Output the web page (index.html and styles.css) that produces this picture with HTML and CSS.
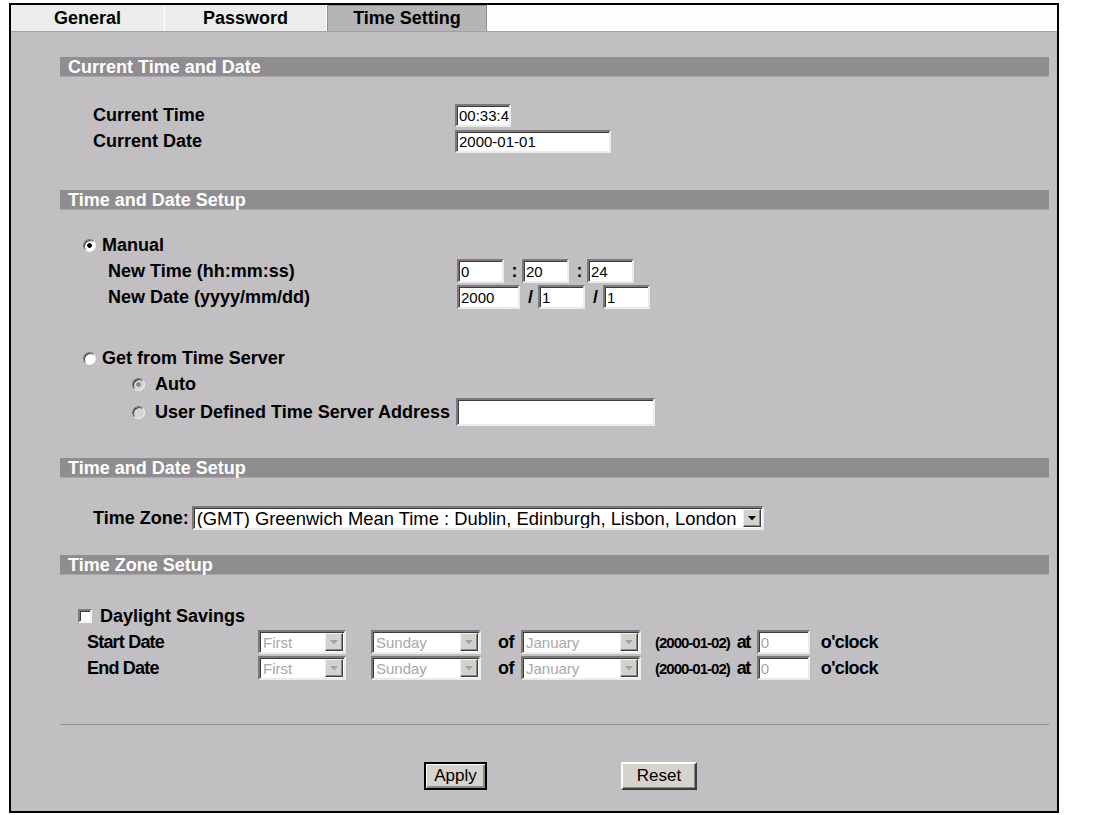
FILE: index.html
```html
<!DOCTYPE html>
<html lang="en">
<head>
<meta charset="UTF-8">
<title>Time Setting</title>
<link rel="stylesheet" href="styles.css">
</head>
<body>
<div class="frame">
  <div class="tabs">
    <div class="tab tab-general">General</div>
    <div class="tab tab-password">Password</div>
    <div class="tab tab-time active">Time Setting</div>
  </div>

  <form class="panel" onsubmit="return false;">
    <div class="bar">Current Time and Date</div>
    <div class="section now">
      <div class="row">
        <span class="lbl">Current Time</span>
        <input class="field w-now" type="text" value="00:33:4">
      </div>
      <div class="row">
        <span class="lbl">Current Date</span>
        <input class="field w-date" type="text" value="2000-01-01">
      </div>
    </div>

    <div class="bar">Time and Date Setup</div>
    <div class="section setup">
      <label class="row opt"><input class="radio" type="radio" name="mode" checked><span class="lbl">Manual</span></label>
      <div class="row sub">
        <span class="lbl">New Time (hh:mm:ss)</span>
        <input class="field w-num" type="text" value="0"><span class="sep">:</span><input class="field w-num" type="text" value="20"><span class="sep">:</span><input class="field w-num" type="text" value="24">
      </div>
      <div class="row sub">
        <span class="lbl">New Date (yyyy/mm/dd)</span>
        <input class="field w-year" type="text" value="2000"><span class="sep">/</span><input class="field w-num" type="text" value="1"><span class="sep">/</span><input class="field w-num" type="text" value="1">
      </div>
      <label class="row opt gap-top"><input class="radio" type="radio" name="mode"><span class="lbl">Get from Time Server</span></label>
      <label class="row server"><input class="radio" type="radio" name="server" checked disabled><span class="lbl">Auto</span></label>
      <div class="row server h30">
        <input class="radio" type="radio" name="server" disabled><span class="lbl">User Defined Time Server Address</span>
        <input class="field w-server" type="text" value="">
      </div>
    </div>

    <div class="bar">Time and Date Setup</div>
    <div class="section zone">
      <div class="row">
        <span class="lbl">Time Zone:</span>
        <span class="combo w-zone">
          <select><option>(GMT) Greenwich Mean Time : Dublin, Edinburgh, Lisbon, London</option></select>
          <span class="drop"><svg width="8" height="5" viewBox="0 0 8 5"><polygon points="0,0 8,0 4,4.5" fill="#000"/></svg></span>
        </span>
      </div>
    </div>

    <div class="bar">Time Zone Setup</div>
    <div class="section daylight">
      <label class="row check"><input class="box" type="checkbox"><span class="lbl">Daylight Savings</span></label>
      <div class="row dst">
        <span class="lbl">Start Date</span>
        <span class="combo w-week off"><select disabled><option>First</option></select><span class="drop"><svg width="8" height="5" viewBox="0 0 8 5"><polygon points="0,0 8,0 4,4.5" fill="#a3a3a3"/></svg></span></span>
        <span class="combo w-day off"><select disabled><option>Sunday</option></select><span class="drop"><svg width="8" height="5" viewBox="0 0 8 5"><polygon points="0,0 8,0 4,4.5" fill="#a3a3a3"/></svg></span></span>
        <span class="txt of">of</span>
        <span class="combo w-month off"><select disabled><option>January</option></select><span class="drop"><svg width="8" height="5" viewBox="0 0 8 5"><polygon points="0,0 8,0 4,4.5" fill="#a3a3a3"/></svg></span></span>
        <span class="txt when">(2000-01-02)</span>
        <span class="txt at">at</span>
        <input class="field w-hour" type="text" value="0" disabled>
        <span class="txt clock">o'clock</span>
      </div>
      <div class="row dst">
        <span class="lbl">End Date</span>
        <span class="combo w-week off"><select disabled><option>First</option></select><span class="drop"><svg width="8" height="5" viewBox="0 0 8 5"><polygon points="0,0 8,0 4,4.5" fill="#a3a3a3"/></svg></span></span>
        <span class="combo w-day off"><select disabled><option>Sunday</option></select><span class="drop"><svg width="8" height="5" viewBox="0 0 8 5"><polygon points="0,0 8,0 4,4.5" fill="#a3a3a3"/></svg></span></span>
        <span class="txt of">of</span>
        <span class="combo w-month off"><select disabled><option>January</option></select><span class="drop"><svg width="8" height="5" viewBox="0 0 8 5"><polygon points="0,0 8,0 4,4.5" fill="#a3a3a3"/></svg></span></span>
        <span class="txt when">(2000-01-02)</span>
        <span class="txt at">at</span>
        <input class="field w-hour" type="text" value="0" disabled>
        <span class="txt clock">o'clock</span>
      </div>
    </div>

    <div class="rule"></div>

    <div class="actions">
      <button type="submit" class="btn btn-default w-apply">Apply</button>
      <button type="reset" class="btn w-reset">Reset</button>
    </div>
  </form>
</div>
</body>
</html>
```

FILE: styles.css
```css
body {
  margin: 0;
  background-color: #fff;
  font-family: "Liberation Sans", Arial, sans-serif;
  color: #000;
}
.frame {
  margin: 3px 0 0 9px;
  width: 1046px;
  height: 806px;
  border: 2px solid #000;
  display: flex;
  flex-direction: column;
}
.tabs {
  display: flex;
  height: 26px;
  background-color: #fdfdfd;
}
.tab {
  display: flex;
  align-items: center;
  justify-content: center;
  box-sizing: border-box;
  font-size: 18px;
  font-weight: bold;
  background-color: #ececec;
  border-right: 1px solid #fff;
}
.tab-general { width: 154px; }
.tab-password { width: 162px; }
.tab-time { width: 160px; }
.tab.active {
  background-color: #b5b4b7;
  border: 1px solid #8d8c8f;
  border-bottom: none;
}
.panel {
  flex: 1;
  margin: 0;
  padding: 25px 8px 0 49px;
  background-color: #c1bfc2;
  border-top: 1px solid #a2a1a4;
}
.bar {
  height: 20px;
  line-height: 20px;
  padding-left: 8px;
  background-color: #8f8d90;
  border-bottom: 1px solid #a7a5a8;
  box-sizing: border-box;
  color: #fff;
  font-size: 18px;
  font-weight: bold;
}
.row {
  display: flex;
  align-items: center;
  height: 26px;
}
.row.h30 { height: 30px; }
.lbl {
  font-size: 18px;
  font-weight: bold;
  white-space: nowrap;
}

/* sections */
.now {
  margin: 25px 0 36px;
  padding-left: 33px;
}
.now .lbl { width: 362px; }
.now .field { height: 23px; }
.setup { margin: 22px 0 31px; }
.setup .opt { padding-left: 23px; }
.setup .opt .radio { margin-right: 6px; }
.setup .gap-top { margin-top: 35px; }
.setup .sub { padding-left: 48px; }
.setup .sub .lbl { width: 349px; }
.setup .server { padding-left: 72px; }
.setup .server .radio { margin-right: 10px; }
.setup .server .field {
  margin-left: 6px;
  height: 28px;
}
.zone {
  margin: 27px 0 24px;
  padding-left: 33px;
}
.zone .combo { margin-left: 3px; }
.daylight { margin-top: 28px; }
.daylight .check { padding-left: 18px; }
.daylight .box { margin-right: 8px; }
.dst { padding-left: 27px; }
.dst .lbl {
  width: 171px;
  letter-spacing: -0.8px;
}
.txt {
  font-size: 18px;
  font-weight: bold;
  white-space: nowrap;
}
.w-day { margin-left: 25px; }
.of {
  margin: 0 7px 0 17px;
  letter-spacing: -0.5px;
}
.when {
  margin-left: 14px;
  font-size: 15px;
  letter-spacing: -1px;
}
.at {
  margin: 0 7px;
  letter-spacing: -1.5px;
}
.clock {
  margin-left: 11px;
  letter-spacing: -0.6px;
}

/* form controls */
.field {
  height: 24px;
  box-sizing: border-box;
  margin: 0;
  padding: 0 0 0 2px;
  border: 2px solid;
  border-color: #7a797b #ebebeb #ebebeb #7a797b;
  box-shadow: inset 1px 1px 0 #3c3c3c;
  background-color: #fff;
  font-family: "Liberation Sans", Arial, sans-serif;
  font-size: 15px;
  color: #000;
  outline: none;
}
.field:disabled { color: #a8a8a8; }
.w-now { width: 56px; }
.w-date { width: 156px; }
.w-num { width: 47px; }
.w-year { width: 63px; }
.w-server { width: 199px; }
.w-hour { width: 53px; }
.sep {
  width: 18px;
  padding-left: 3px;
  box-sizing: border-box;
  text-align: center;
  font-size: 18px;
  font-weight: bold;
}
.combo {
  display: inline-flex;
  height: 24px;
  box-sizing: border-box;
  border: 2px solid;
  border-color: #7a797b #ebebeb #ebebeb #7a797b;
  box-shadow: inset 1px 1px 0 #3c3c3c;
  background-color: #fff;
}
.combo select {
  -webkit-appearance: none;
  appearance: none;
  flex: 1;
  min-width: 0;
  margin: 0;
  padding: 0 3px;
  border: none;
  background: transparent;
  font-family: "Liberation Sans", Arial, sans-serif;
  font-size: 18.4px;
  color: #000;
  outline: none;
}
.combo select:disabled {
  color: #a8a8a8;
  opacity: 1;
}
.drop {
  width: 18px;
  margin: 1px 1px 1px 0;
  display: flex;
  align-items: center;
  justify-content: center;
  box-sizing: border-box;
  background-color: #d5d2cd;
  border: 1px solid;
  border-color: #f0f0f0 #3c3c3c #3c3c3c #f0f0f0;
  box-shadow: inset -1px -1px 0 #8a8a8a;
}
.w-zone { width: 572px; }
.w-week { width: 88px; }
.w-day { width: 110px; }
.w-month { width: 120px; }
.off select { font-size: 15px; }
.radio {
  -webkit-appearance: none;
  appearance: none;
  width: 13px;
  height: 13px;
  margin: 0;
  flex: none;
  border-radius: 50%;
  border: 1px solid;
  border-color: #7a797b #f4f4f4 #f4f4f4 #7a797b;
  box-shadow: inset 1px 1px 0 #3c3c3c;
  background: #fff;
}
.radio:checked { background: radial-gradient(circle, #000 0 2px, #fff 2.6px); }
.radio:disabled { background: #d6d4d6; }
.radio:disabled:checked { background: radial-gradient(circle, #8a8a8a 0 2px, #d6d4d6 2.6px); }
.box {
  -webkit-appearance: none;
  appearance: none;
  width: 14px;
  height: 14px;
  margin: 0;
  flex: none;
  border: 2px solid;
  border-color: #7a797b #f4f4f4 #f4f4f4 #7a797b;
  box-shadow: inset 1px 1px 0 #3c3c3c;
  background-color: #fff;
}
.rule {
  margin-top: 43px;
  border-top: 1px solid #8f8d90;
}
.actions {
  display: flex;
  gap: 134px;
  margin-top: 37px;
  padding-left: 364px;
}
.btn {
  height: 28px;
  padding: 0;
  background-color: #d6d3ce;
  border: 2px solid;
  border-color: #fff #3c3c3c #3c3c3c #fff;
  box-shadow: inset -1px -1px 0 #8a8a8a;
  font-family: "Liberation Sans", Arial, sans-serif;
  font-size: 17px;
  color: #000;
}
.btn-default {
  border-color: #000;
  box-shadow: inset 1px 1px 0 #fff, inset -2px -2px 0 #8a8a8a;
}
.w-apply { width: 63px; }
.w-reset { width: 76px; }
```
